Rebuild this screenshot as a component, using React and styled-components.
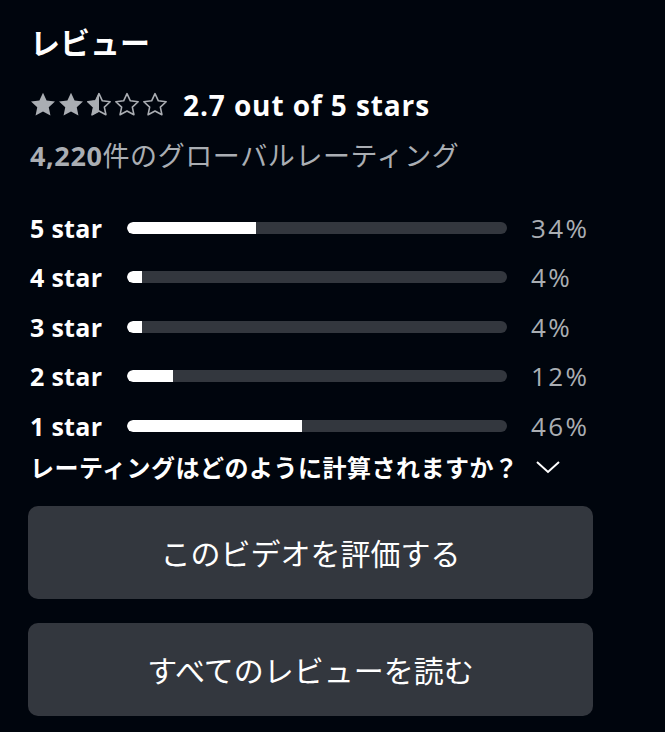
import React from "react";
import styled, { createGlobalStyle } from "styled-components";

const Global = createGlobalStyle`
  html, body { margin: 0; padding: 0; background: #00050d; }
  body { font-family: "Noto Sans", "Noto Sans CJK JP", sans-serif; color: #fff; }
`;

const Page = styled.div`
  width: 665px;
  min-height: 732px;
  box-sizing: border-box;
  padding: 21px 72px 0 30px;
  display: flex;
  flex-direction: column;
`;

const Heading = styled.h2`
  margin: 0;
  font-size: 30px;
  font-weight: 700;
  line-height: 40px;
  font-family: "Noto Sans CJK JP", sans-serif;
`;

const RatingRow = styled.div`
  display: flex;
  align-items: center;
  gap: 15px;
  margin-top: 27px;
  height: 34px;
`;

const Stars = styled.div`
  display: flex;
  gap: 2px;
`;

const RatingText = styled.span`
  font-size: 28px;
  font-weight: 700;
  font-family: "Open Sans", "Noto Sans", sans-serif;
  letter-spacing: 0.9px;
  line-height: 34px;
`;

const GlobalCount = styled.div`
  margin-top: 15px;
  font-size: 27px;
  color: #aaaeb3;
  line-height: 36px;
  letter-spacing: 0.6px;
  font-family: "Noto Sans CJK JP", sans-serif;
  b {
    font-family: "Open Sans", sans-serif;
    font-weight: 700;
  }
`;

const Bars = styled.div`
  margin-top: 29px;
  display: flex;
  flex-direction: column;
`;

const BarRow = styled.div`
  display: grid;
  grid-template-columns: 97px 380px auto;
  align-items: center;
  height: 49.5px;
`;

const BarLabel = styled.span`
  font-size: 25px;
  font-weight: 700;
  font-family: "Open Sans", "Noto Sans", sans-serif;
  letter-spacing: 0.3px;
`;

const Track = styled.div`
  height: 12px;
  border-radius: 6px;
  background: #33373e;
  overflow: hidden;
`;

const Fill = styled.div`
  height: 100%;
  background: #fff;
  border-radius: 6px 0 0 6px;
`;

const Pct = styled.span`
  margin-left: 24px;
  font-size: 26px;
  color: #aaaeb3;
  letter-spacing: 2.4px;
  font-family: "Open Sans", "Noto Sans", sans-serif;
`;

const HowRow = styled.div`
  display: flex;
  align-items: center;
  gap: 16px;
  margin-top: -2px;
  height: 36px;
  font-size: 24px;
  font-weight: 700;
  letter-spacing: 0.5px;
  font-family: "Noto Sans CJK JP", sans-serif;
`;

const Buttons = styled.div`
  display: flex;
  flex-direction: column;
  gap: 24px;
  margin-top: 21px;
  margin-left: -2px;
`;

const Button = styled.button`
  width: 565px;
  height: 93px;
  padding: 0;
  border: none;
  border-radius: 10px;
  background: #33373e;
  color: #fff;
  font-size: 30px;
  font-family: "Noto Sans CJK JP", sans-serif;
  cursor: pointer;
`;

const STAR = "M13 0.8l3.6 7.7 8.4 1-6.25 5.7 1.7 8.3L13 19.4l-7.45 4.1 1.7-8.3L1 9.5l8.4-1z";

function Star({ kind }) {
  return (
    <svg width="26" height="26" viewBox="0 0 26 26">
      <defs>
        <clipPath id="half">
          <rect x="0" y="0" width="13" height="26" />
        </clipPath>
      </defs>
      {kind === "full" && <path d={STAR} fill="#aaaeb3" />}
      {kind !== "full" && (
        <path
          d={STAR}
          fill="none"
          stroke="#aaaeb3"
          strokeWidth="1.7"
          strokeLinejoin="round"
          transform="translate(13 13) scale(0.93) translate(-13 -13)"
        />
      )}
      {kind === "half" && <path d={STAR} fill="#aaaeb3" clipPath="url(#half)" />}
    </svg>
  );
}

const data = [
  ["5 star", 34],
  ["4 star", 4],
  ["3 star", 4],
  ["2 star", 12],
  ["1 star", 46],
];

export default function App() {
  return (
    <>
      <Global />
      <Page>
        <Heading>レビュー</Heading>
        <RatingRow>
          <Stars>
            <Star kind="full" />
            <Star kind="full" />
            <Star kind="half" />
            <Star kind="empty" />
            <Star kind="empty" />
          </Stars>
          <RatingText>2.7 out of 5 stars</RatingText>
        </RatingRow>
        <GlobalCount>
          <b>4,220</b>件のグローバルレーティング
        </GlobalCount>
        <Bars>
          {data.map(([label, p]) => (
            <BarRow key={label}>
              <BarLabel>{label}</BarLabel>
              <Track>
                <Fill style={{ width: `${p}%` }} />
              </Track>
              <Pct>{p}%</Pct>
            </BarRow>
          ))}
        </Bars>
        <HowRow>
          レーティングはどのように計算されますか？
          <svg width="26" height="16" viewBox="0 0 26 16">
            <path d="M2 3l11 10L24 3" fill="none" stroke="#fff" strokeWidth="2" />
          </svg>
        </HowRow>
        <Buttons>
          <Button>このビデオを評価する</Button>
          <Button>すべてのレビューを読む</Button>
        </Buttons>
      </Page>
    </>
  );
}
